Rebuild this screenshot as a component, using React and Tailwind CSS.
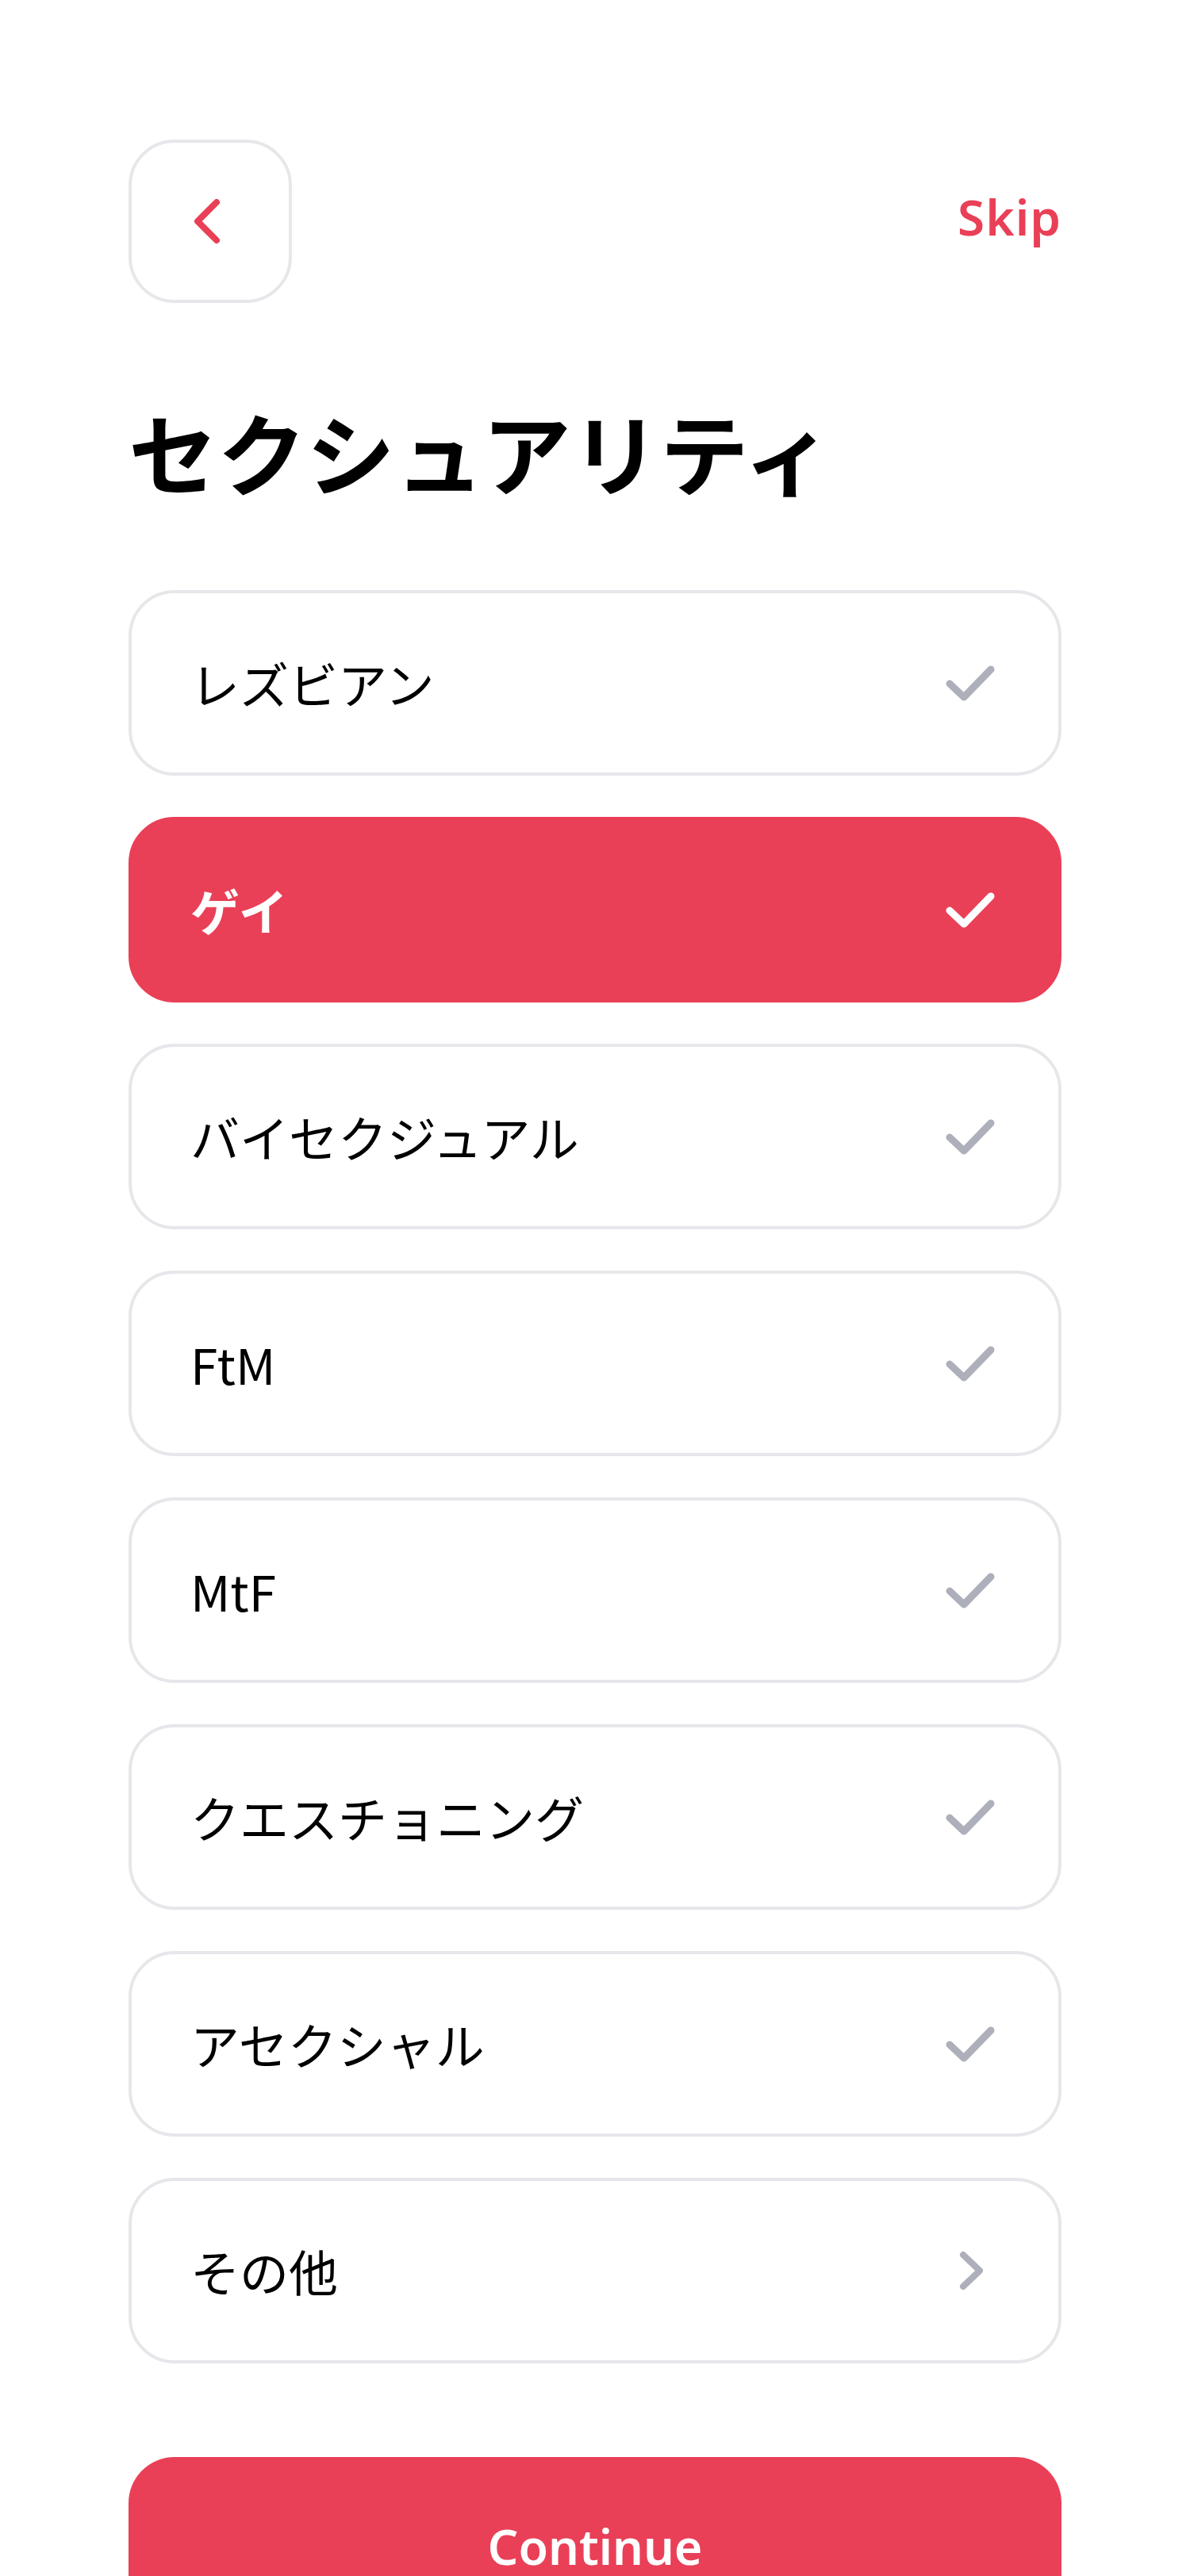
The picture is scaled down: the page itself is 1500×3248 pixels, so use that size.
const options = [
    { label: 'レズビアン', selected: false },
    { label: 'ゲイ', selected: true },
    { label: 'バイセクジュアル', selected: false },
    { label: 'FtM', selected: false },
    { label: 'MtF', selected: false },
    { label: 'クエスチョニング', selected: false },
    { label: 'アセクシャル', selected: false },
    { label: 'その他', selected: false, more: true },
];

const jp = { fontFamily: '"Noto Sans CJK JP", "Noto Sans", sans-serif' };
const latin = { fontFamily: '"Noto Sans", "Noto Sans CJK JP", sans-serif' };

function CheckIcon({ color }) {
    return (
        <svg width="64" height="48" viewBox="0 0 64 48" fill="none">
            <path d="M7 25 L25 42 L59 7" stroke={color} strokeWidth="9" strokeLinecap="round" strokeLinejoin="round" />
        </svg>
    );
}

function ChevronRight() {
    return (
        <svg width="64" height="60" viewBox="0 0 64 60" fill="none">
            <path d="M24 10 L45 30 L24 50" stroke="#ADAFBB" strokeWidth="8" strokeLinecap="round" strokeLinejoin="round" />
        </svg>
    );
}

export default function App() {
    return (
        <div className="w-[1500px] h-[3248px] overflow-hidden bg-white" style={jp}>
            <div className="px-[162px] pt-[176px]">
                {/* Header */}
                <div className="flex items-center justify-between">
                    <button className="w-[206px] h-[206px] rounded-[58px] border-[4px] border-[#E8E6EA] bg-white flex items-center justify-center">
                        <svg width="60" height="70" viewBox="0 0 60 70" fill="none" className="-ml-[6px]">
                            <path d="M41 11 L17 35 L41 59" stroke="#E94057" strokeWidth="8" strokeLinecap="round" strokeLinejoin="round" />
                        </svg>
                    </button>
                    <span className="mb-[12px] text-[62px] font-semibold text-[#E94057] tracking-[1px] leading-none" style={latin}>Skip</span>
                </div>

                {/* Title */}
                <h1 className="mt-[130px] text-[112px] font-bold leading-none text-black">セクシュアリティ</h1>

                {/* Options */}
                <div className="mt-[120px] flex flex-col gap-[52px]">
                    {options.map((opt) => (
                        <div
                            key={opt.label}
                            className={`h-[234px] rounded-[58px] flex items-center justify-between pl-[74px] pr-[80px] ${
                                opt.selected ? 'bg-[#E94057] border-[4px] border-[#E94057]' : 'bg-white border-[4px] border-[#E8E6EA]'
                            }`}
                        >
                            <span className={`text-[62px] leading-none ${opt.selected ? 'text-white font-bold' : 'text-black font-normal'}`}>
                                {opt.label}
                            </span>
                            {opt.more ? <ChevronRight /> : <CheckIcon color={opt.selected ? '#FFFFFF' : '#ADAFBB'} />}
                        </div>
                    ))}
                </div>

                {/* Continue */}
                <button className="mt-[118px] w-full h-[224px] rounded-[58px] bg-[#E94057] flex items-center justify-center">
                    <span className="text-[61px] font-semibold text-white leading-none" style={latin}>Continue</span>
                </button>
            </div>
        </div>
    );
}
